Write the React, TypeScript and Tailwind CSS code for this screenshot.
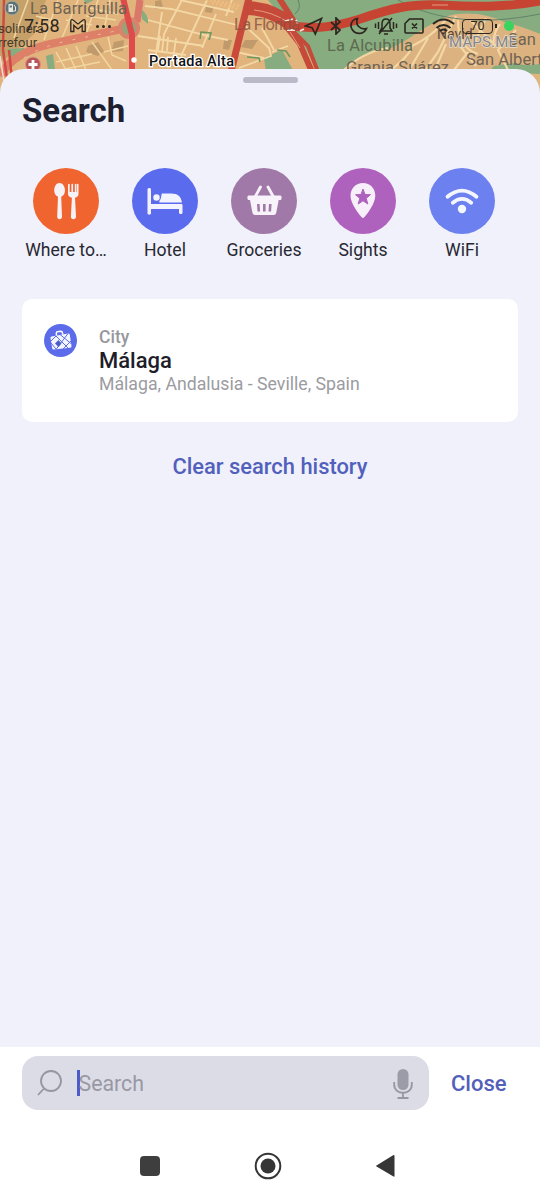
import type { ReactNode } from "react";

function MapBackdrop() {
  return (
    <svg
      className="absolute inset-x-0 top-0 w-full h-[110px]"
      viewBox="0 0 540 110"
      fill="none"
    >
      <rect width="540" height="110" fill="#e0b47c" />
      <path d="M0 0h46l-12 34-22 20-12 8z" fill="#c6a069" />
      {/* parks */}
      <g fill="#86ac80">
        <path d="M268 0H540V72H318L298 34 284 20z" />
        <path d="M264 58l18-8 12 22h-28z" />
        <path d="M8 49l16-1 1 3-14 11zM46 56l7-2 2 16h-7zM84 0h10l-8 4zM141 9q8 6 7 15l-6-5z" />
      </g>
      <path
        d="M340 74c10-14 26-22 46-24 22-8 34-22 62-34 18-5 40-2 56 6 16 4 26 8 36 12v30l-22 2-26 8z"
        fill="#dcb280"
      />
      <path d="M488 72l6-6 20-3 26 5v6z" fill="#86ac80" />
      <path
        d="M88 46l10-4 6 9-6 5-12-4zM114 42l10-2-1 11-12 1zM155 1l6-1 2 7-8 2zM206 7l8-1-2 7-7-1zM245 40l13 0-6 9-11-2zM224 40l8 0-3 10-6-1z"
        fill="#c09a6b"
      />
      {/* small streets */}
      <g stroke="#f2d6a0" strokeWidth="1.5">
        <path d="M28 0L14 38M58 0L44 40M78 0L62 38M98 0L86 34M36 16l24 6M66 20l26 5M90 8l28 6" />
        <path d="M86 16l30 4M110 0l-6 30M56 52l10 18M66 48l10 22M76 46l10 24M92 42l20 28M108 37l4 18 14 6M104 52l24-6" />
        <path d="M56 62l36-8M60 70l40-8" />
      </g>
      <g stroke="#f4d9a6" strokeWidth="1.8">
        <path d="M145 6l26 3 66 16M148 20l60 16 20 4M138 36l66 10M162 12l-6 42M182 0l-18 34-2 18M207 0l-12 26-14 30" />
        <path d="M216 14l-14 34M232 0l-6 16M180 0l54 12M160 36l-2 14M168 37l-1 14M176 38l-2 15M148 50l38 5" />
        <path d="M241 22l28 26 2 8-32 12M272 52l16-6M236 52l28 6M262 28l12 22" />
      </g>
      <g stroke="#f3d7a4" strokeWidth="2.2">
        <path d="M342 72q20-20 46-24M386 74q24-18 26-28 18-8 34-26M408 72l20-34M424 72l14-20 18-36M446 44l-12 28" />
        <path d="M458 20q0 28 20 34M470 20l26 26M486 18l-12 26M500 24q-8 10-6 24M516 30l-18 20 10 20M454 70l14-18M476 66l-16-20" />
      </g>
      <g stroke="#f0bd80" strokeDasharray="2 2" strokeWidth="3">
        <path d="M206 -1l34 7M212 3l26 6" />
      </g>
      <g stroke="#6f9560" strokeWidth="1.600">
        <path d="M200 39l1-7 10 1-2 7M247 57l12 1 1 4M277 50l9 1 4 6" />
      </g>
      <path d="M298 0q4 8-3 14M540 14c-60 12-105 6-142-14" stroke="#64836a" strokeWidth="1" />
      {/* avenues */}
      <path d="M0 76Q14 50 60 42L122 29" stroke="#de7f68" strokeWidth="8" />
      <path d="M24 58Q40 47 67 41L116 31" stroke="#f0b8a0" strokeWidth="1" strokeDasharray="3 10" />
      <path d="M140 0l-3 22" stroke="#d9776a" strokeWidth="7" />
      <circle cx="129" cy="28" r="9" fill="#94a478" stroke="#d9826c" strokeWidth="4" />
      <path d="M123-2L132 35V72" stroke="#dd4c4b" strokeWidth="6" />
      <path d="M4 0L3 50 7 78M9 50l3 30" stroke="#cf4a42" strokeWidth="2.5" />
      <path d="M0 56l4 26" stroke="#f1dcd6" strokeWidth="1.5" />
      <path d="M249-2L231 72" stroke="#c9493b" strokeWidth="7" />
      <path d="M246 8q24 0 46 17" stroke="#c54a3a" strokeWidth="14" />
      <path
        d="M284 25C318 30 334 27 360 19 392 8 410 4 440 5 480 7 510 7 540 1"
        stroke="#c74432"
        strokeWidth="9"
      />
      <path d="M279-2l14 22M286 26l14 18 12 28" stroke="#c54a3a" strokeWidth="6" />
      <path d="M292 30l16 16 10 26" stroke="#c54a3a" strokeWidth="4" />
      <path d="M254 10q18 2 32 11M290 32l10 16M432 5h16" stroke="#e59b80" strokeWidth="1" />
      <path d="M285 21l8-2M287 30l8 0M296 20l2 4M300 31l4-2" stroke="#eee5df" strokeWidth="1.800" />
      {/* labels */}
      <g fontFamily="Roboto, sans-serif" fill="#6f6354" fontSize="16.500">
        <text x="30" y="14" textLength="97">La Barriguilla</text>
        <text x="234" y="30" fill="#8a4f40" opacity="0.8" textLength="66">La Florida</text>
        <text x="327" y="51" fill="#60694f" textLength="86">La Alcubilla</text>
        <text x="346" y="73" textLength="103">Granja Suárez</text>
        <text x="437" y="39" fontSize="14" fill="#55493c">Navid</text>
        <text x="508" y="45">San</text>
        <text x="466" y="65" textLength="86">San Alberto</text>
        <text x="449" y="47" fill="#85868a" fontSize="15" textLength="68" stroke="#e9dcc8" strokeWidth="1.500" paintOrder="stroke">
          MAPS.ME
        </text>
        <text x="-2" y="33" fill="#453b2e" fontSize="13">solinera</text>
        <text x="-2" y="47" fill="#453b2e" fontSize="13">rrefour</text>
        <text x="149" y="66" fill="#111" fontSize="14.500" fontWeight="500" stroke="#fff" strokeWidth="2.500" paintOrder="stroke" textLength="85">
          Portada Alta
        </text>
      </g>
      <circle cx="12" cy="8" r="7" fill="#5f7376" stroke="#a9ae9a" />
      <path d="M8.500 4h4.500v8H8.500z" fill="#e7e8df" />
      <path d="M9.700 5.500h2.200v2H9.700z" fill="#5f7376" />
      <path d="M14 5l1.500 2v4H13" stroke="#e7e8df" strokeWidth="1" />
      <circle cx="33" cy="64.500" r="7.500" fill="#b9545a" stroke="#d9958a" />
      <path d="M33 60v9M28.500 64.500h9" stroke="white" strokeWidth="2.800" />
      <circle cx="134" cy="60" r="2.700" fill="white" />
    </svg>
  );
}

function StatusBar() {
  return (
    <div className="relative flex h-[52px] items-center pl-6 pr-[26px] text-[#2b261f]">
      <span className="w-[46px] text-[18px] leading-5 tracking-[0.3px]">7:58</span>
      <svg className="w-4 h-4" viewBox="0 0 16 16" fill="none" stroke="currentColor" strokeWidth="1.3">
        <path d="M.8 13.500V3Q1 1 3 2l5 4 5-4q2-1 2.200 1v10.500h-3V7.500L8 11 3.800 7.500v6z" />
      </svg>
      <span className="ml-[10px] flex gap-[3px]">
        <i className="size-[3px] rounded-full bg-current" />
        <i className="size-[3px] rounded-full bg-current" />
        <i className="size-[3px] rounded-full bg-current" />
      </span>
      <div className="ml-auto flex items-center">
        <svg className="w-[19px] h-[19px]" viewBox="0 0 19 19" fill="none" stroke="currentColor" strokeWidth="1.700">
          <path d="M17.500 1.500L1.500 9l6.500 1.700 3.300 6.300z" />
        </svg>
        <svg className="ml-[7px] w-3 h-[18px]" viewBox="0 0 12 18" fill="none" stroke="currentColor" strokeWidth="1.700">
          <path d="M1 5l9 8-4 4V1l4 4-9 8" />
        </svg>
        <svg className="ml-2 w-[18px] h-[18px]" viewBox="0 0 18 18" fill="none" stroke="currentColor" strokeWidth="1.700">
          <path d="M7.500 1.500C1 2.500-.5 9 2.500 13c3.500 5 11.500 4.500 14-1.500C9.500 13 5 7.500 7.500 1.500z" />
        </svg>
        <svg className="ml-1.5 w-6 h-5" viewBox="0 0 24 20" fill="none" stroke="currentColor" strokeWidth="1.500">
          <path d="M6 15h12l-2-3V8q0-5-4-5T8 8v4zM10 18h4M5 18L18 2M4.500 6v7M1.500 7.500v4.500M19.500 6v7M22.500 7.500v4.500" />
        </svg>
        <svg className="ml-[6px] w-5 h-4" viewBox="0 0 20 16" fill="none" stroke="currentColor" strokeWidth="1.600">
          <path d="M5.500 1H18q1 0 1 1v12q0 1-1 1H2q-1 0-1-1V5.500zM8 5.500l5 5M13 5.500l-5 5" />
        </svg>
        <svg className="ml-2 w-[23px] h-[17px]" viewBox="0 0 23 17" fill="none" stroke="currentColor" strokeWidth="2">
          <path d="M1 6Q11.500-3 22 6M4.500 10q7-6 14 0M8 13q3.500-3 7 0" />
          <path d="M9.500 14.500h4l-2 2z" fill="currentColor" stroke="none" />
        </svg>
        <span className="ml-[7px] flex h-[15px] w-[31px] items-center justify-center rounded-[4px] border-[1.5px] border-current text-[12.5px] leading-none">
          70
        </span>
        <i className="ml-[2px] h-1 w-[2px] bg-current" />
        <i className="ml-[7px] size-[10px] rounded-full bg-[#39d45e]" />
      </div>
    </div>
  );
}

function Category({ label, color, children }: { label: string; color: string; children: ReactNode }) {
  return (
    <button type="button" className="flex w-[99px] shrink-0 flex-col items-center">
      <span className={`flex size-[66px] items-center justify-center rounded-full ${color}`}>
        <svg className="size-[66px]" viewBox="0 0 66 66" fill="none">
          {children}
        </svg>
      </span>
      <span className="mt-[5px] text-[17.6px] leading-[22px] text-[#272832]">{label}</span>
    </button>
  );
}

function Categories() {
  return (
    <div className="mt-[37px] flex px-[16.5px]">
      <Category label="Where to…" color="bg-[#f0642f]">
        <g fill="#f6f1f5">
          <path d="M26.500 15c3.300 0 5.500 3.600 5.500 7.500 0 3-1.500 5.400-3.800 6.200L29 48.500c.2 3.600-5 3.600-4.800 0l.8-19.800c-2.300-.8-3.800-3.200-3.800-6.200 0-3.900 2-7.500 5.300-7.500z" />
          <path d="M35 16.500c0-1 1.700-1 1.700 0V24h1.700v-7.500c0-1 1.700-1 1.700 0V24h1.700v-7.500c0-1 1.700-1 1.700 0V24H44v-7.500c0-1 1.500-1 1.500 0V26c0 2-1.800 3.500-3.500 3.700l1 18.800c.2 3.600-5.300 3.600-5.100 0l1-18.800C37 29.500 35 28 35 26z" />
        </g>
      </Category>
      <Category label="Hotel" color="bg-[#5b6bee]">
        <g fill="#f2f3ff">
          <path d="M15.500 21.500c0-2 3.500-2 3.500 0V36h30.500q1 0 1 1v7.500c0 2-3.500 2-3.500 0V41H19v4.500c0 1.500-3.500 1.500-3.500 0z" />
          <circle cx="24.500" cy="29.500" r="3.200" />
          <path d="M30 25.500h9c7 0 10 3 11 9H28c-1 0-1-1-.5-1.700 2-2 1.500-6 2.500-7.300z" />
        </g>
      </Category>
      <Category label="Groceries" color="bg-[#a179a8]">
        <path d="M24 29l5.500-10M42.500 29L37 19" stroke="#f8f2fa" strokeWidth="2.800" strokeLinecap="round" />
        <path d="M17.500 27.500h32c1.500 0 1.500 4.500 0 4.500h-1.800l-2.500 13q-.5 2-2.500 2H24q-2 0-2.500-2L19 32h-1.500c-1.500 0-1.500-4.500 0-4.500z" fill="#f8f2fa" />
        <path d="M27.300 36l.5 7.500M33.300 36v7.500M39.300 36l-.5 7.500" stroke="#a179a8" strokeWidth="2.600" />
      </Category>
      <Category label="Sights" color="bg-[#af62bd]">
        <path d="M33 15c7 0 12.300 5.300 12.300 12.500C45.300 36 37 46 34.300 49.300q-1.300 1.600-2.600 0C29 46 20.500 36 20.500 27.500 20.500 20.300 26 15 33 15z" fill="#f7eff9" />
        <path d="M33 21l2 5.500 5.500.2-4.300 3.600 1.600 5.700-4.800-3.200-4.800 3.200 1.600-5.700-4.300-3.600 5.500-.2z" fill="#af62bd" stroke="#af62bd" strokeLinejoin="round" />
      </Category>
      <Category label="WiFi" color="bg-[#6c80ef]">
        <path d="M18.500 28.800Q33 16.500 47.500 28.800M23.800 34.800Q33 27 42.200 34.800" stroke="#f4f6ff" strokeWidth="3.800" strokeLinecap="round" />
        <circle cx="33" cy="41" r="4.200" fill="#f4f6ff" />
      </Category>
    </div>
  );
}

function HistoryCard() {
  return (
    <div className="mx-[22px] mt-[38px] flex h-[123px] rounded-[10px] bg-white pl-[22px] pt-[25px]">
      <svg className="size-[33px]" viewBox="0 0 33 33" fill="none">
        <circle cx="16.500" cy="16.500" r="16.500" fill="#5b6bea" />
        <path d="M12.500 11.500l-.2-2.500q.2-1.500 2-1.500l2.500-.2q1.500 0 1.700 1.500l.2 2" stroke="white" strokeWidth="1.500" />
        <path d="M7.500 12.500L24 9.500q1.500-.2 1.800 1.300L27.500 22q.2 1.500-1.300 1.800L10 25.500q-1.500.2-1.800-1.300L6.500 14q-.2-1.300 1-1.500z" fill="#f4f6ff" />
        <path d="M6 18l6-6 12 12M12 25.500L24 9.500M16 10.500l11 9M7 19l5 6M19 25l8-8" stroke="#5b6bea" strokeWidth="1" />
        <path d="M11 19.500l3.500-3.500 3 3.500-3 3.500z" fill="#4c5dce" />
      </svg>
      <div className="ml-[22px] mt-[2px]">
        <p className="text-[17.5px] leading-[23px] font-medium text-[#97979d]">City</p>
        <p className="text-[22px] leading-6 font-medium text-[#1d1e2a]">Málaga</p>
        <p className="text-[17.7px] leading-[23px] text-[#9b9ba1]">Málaga, Andalusia - Seville, Spain</p>
      </div>
    </div>
  );
}

function SearchBar() {
  return (
    <div className="flex h-[74px] items-start bg-white px-[22px] pt-[9px]">
      <div className="flex h-[54px] w-[407px] items-center rounded-[16px] bg-[#dcdce6] pl-[15px] pr-4">
        <svg className="size-[26px]" viewBox="0 0 26 26" fill="none" stroke="#96969f" strokeWidth="1.800">
          <circle cx="14" cy="11" r="10" />
          <path d="M7 18.500L1 25" />
        </svg>
        <span className="ml-[14px] h-[26px] w-[2.5px] bg-[#4d5ac9]" />
        <span className="-ml-px pt-[2px] text-[21.3px] text-[#9898a4]">Search</span>
        <svg className="ml-auto mt-[2px] w-5 h-[30px]" viewBox="0 0 20 30" fill="none" stroke="#9797a2" strokeWidth="1.800">
          <rect x="4.500" y="0" width="11" height="21" rx="5.500" fill="#9c9ca8" stroke="none" />
          <path d="M1.200 13v2.500c0 11 17.600 11 17.600 0V13M10 23.500V29M4.500 29h11" />
        </svg>
      </div>
      <button type="button" className="ml-[22px] mt-[15px] text-[22px] leading-[26px] font-medium text-[#5260bb]">
        Close
      </button>
    </div>
  );
}

function NavigationBar() {
  return (
    <div className="flex h-[79px] items-center bg-white pt-[10px] pl-[140px]">
      <span className="size-5 rounded-[4px] bg-[#3e3e3e]" />
      <svg className="ml-[94px] size-7" viewBox="0 0 28 28" fill="none">
        <circle cx="14" cy="14" r="12.300" stroke="#363636" strokeWidth="2" />
        <circle cx="14" cy="14" r="7.500" fill="#363636" />
      </svg>
      <svg className="ml-[93px] w-5 h-6" viewBox="0 0 20 24" fill="#363636">
        <path d="M18.500 1q1 0 1 1v20q0 1-1 .5L1.500 12.500q-1-.5 0-1z" />
      </svg>
    </div>
  );
}

export default function App() {
  return (
    <main className="relative flex h-[1200px] w-[540px] flex-col overflow-hidden bg-white font-['Roboto',sans-serif]">
      <MapBackdrop />
      <header className="h-[69px] shrink-0">
        <StatusBar />
      </header>
      <section className="relative flex h-[978px] shrink-0 flex-col rounded-t-[24px] bg-[#f0f1fa]">
        <div className="mx-auto mt-2 h-[6px] w-[55px] rounded-full bg-[#b9b9c8]" />
        <h1 className="ml-[22px] mt-2 text-[33px] leading-10 font-bold text-[#1d1e30]">Search</h1>
        <Categories />
        <HistoryCard />
        <button type="button" className="mt-[31px] self-center text-[21.9px] leading-7 font-medium text-[#5260bd]">
          Clear search history
        </button>
      </section>
      <SearchBar />
      <NavigationBar />
    </main>
  );
}
